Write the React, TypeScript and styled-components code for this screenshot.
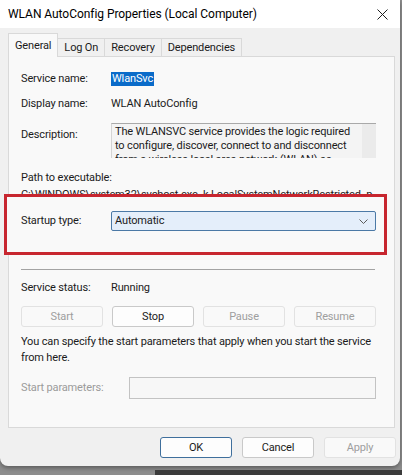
import React from 'react';
import styled, { createGlobalStyle } from 'styled-components';

const GlobalStyle = createGlobalStyle`
  html, body {
    margin: 0;
    padding: 0;
  }
  body {
    width: 402px;
    height: 475px;
    overflow: hidden;
    background: #8d8d8d;
    font-family: Roboto, "Liberation Sans", sans-serif;
    font-size: 11px;
    letter-spacing: -0.15px;
    color: #1b1b1b;
  }
`;

const Page = styled.div`
  width: 402px;
  height: 475px;
  display: flex;
  flex-direction: column;
`;

const Window = styled.div`
  width: 400px;
  height: 466px;
  background: #f0f0f0;
  border-radius: 0 0 8px 8px;
  box-shadow: 0 2px 4px rgba(0, 0, 0, 0.35);
  display: flex;
  flex-direction: column;
  overflow: hidden;
`;

const Backdrop = styled.div`
  flex: 1;
  display: flex;
  padding: 4px 0 0 155px;
`;

const DarkBlock = styled.div`
  flex: 1;
  background: #3b3b3b;
`;

const TitleBar = styled.div`
  height: 28px;
  background: #ffffff;
  display: flex;
  align-items: center;
  justify-content: space-between;
  padding-left: 8px;
`;

const Title = styled.div`
  font-size: 12px;
  letter-spacing: -0.05px;
  color: #000;
`;

const CloseButton = styled.div`
  width: 36px;
  height: 28px;
  display: flex;
  align-items: center;
  justify-content: center;
`;

const Body = styled.div`
  flex: 1;
  padding: 5px 5px 0 8px;
  display: flex;
  flex-direction: column;
`;

const TabRow = styled.div`
  height: 23px;
  display: flex;
  align-items: flex-end;
`;

const Tab = styled.div<{ $active?: boolean }>`
  position: relative;
  box-sizing: border-box;
  height: ${p => (p.$active ? '24px' : '18px')};
  margin-bottom: ${p => (p.$active ? '-1px' : '0')};
  margin-left: ${p => (p.$active ? '0' : '-1px')};
  padding: 0 6px;
  display: flex;
  align-items: center;
  background: ${p => (p.$active ? '#f9f9f9' : '#f0f0f0')};
  border: 1px solid #d9d9d9;
  border-bottom: none;
  z-index: ${p => (p.$active ? 1 : 0)};
  color: #1b1b1b;
  &:first-child {
    margin-left: 0;
  }
`;

const Panel = styled.div`
  box-sizing: border-box;
  height: 372px;
  background: #f9f9f9;
  border: 1px solid #d9d9d9;
  padding: 0 18px 0 12px;
  display: flex;
  flex-direction: column;
`;

const FieldRow = styled.div<{ $top: number; $label?: number }>`
  margin-top: ${p => p.$top}px;
  display: grid;
  grid-template-columns: ${p => p.$label ?? 90}px 1fr;
  align-items: center;
  line-height: 14px;
`;

const Label = styled.div<{ $muted?: boolean; $pad?: number }>`
  align-self: ${p => (p.$pad ? 'start' : 'center')};
  padding-top: ${p => p.$pad ?? 0}px;
  color: ${p => (p.$muted ? '#9b9b9b' : '#1b1b1b')};
`;

const Selected = styled.span`
  justify-self: start;
  background: #0a6bc9;
  color: #ffffff;
  padding: 0 1px;
`;

const DescBox = styled.div`
  height: 35px;
  box-sizing: border-box;
  border-top: 1px solid #a9a9a9;
  border-left: 1px solid #d4d4d4;
  background: #f4f4f4;
  display: flex;
  overflow: hidden;
`;

const DescText = styled.div`
  flex: 1;
  padding: 1px 0 0 3px;
  line-height: 14px;
  white-space: nowrap;
  overflow: hidden;
`;

const ScrollTrack = styled.div`
  width: 14px;
  background: #ebebeb;
`;

const Line = styled.div<{ $top: number }>`
  margin-top: ${p => p.$top}px;
  line-height: 14px;
  white-space: nowrap;
  overflow: hidden;
`;

const Highlight = styled.div`
  position: relative;
  margin: -8px -11px 0 -17px;
  height: 61px;
  box-sizing: border-box;
  border: 3px solid #c7262f;
  background: #f9f9f9;
  padding: 14px 8px 0 14px;
`;

const SelectBox = styled.div`
  height: 20px;
  box-sizing: border-box;
  border: 1px solid #4b79a6;
  border-radius: 2px;
  background: #e4eefa;
  display: flex;
  align-items: center;
  justify-content: space-between;
  padding: 0 7px 0 3px;
`;

const Separator = styled.div`
  margin-top: 14px;
  margin-right: 1px;
  height: 1px;
  background: #a3a3a3;
`;

const ButtonRow = styled.div`
  margin-top: 11px;
  display: grid;
  grid-template-columns: repeat(4, 1fr);
  gap: 9px;
`;

const Button = styled.div<{ $disabled?: boolean; $primary?: boolean; $w?: number }>`
  box-sizing: border-box;
  height: 21px;
  width: ${p => (p.$w ? `${p.$w}px` : 'auto')};
  display: flex;
  align-items: center;
  justify-content: center;
  border-radius: 3px;
  background: ${p => (p.$disabled ? '#f9f9f9' : '#fdfdfd')};
  border: 1px solid ${p => (p.$primary ? '#3f6f9c' : p.$disabled ? '#e2e2e2' : '#c9c9c9')};
  color: ${p => (p.$disabled ? '#9e9e9e' : '#1b1b1b')};
`;

const Paragraph = styled.div`
  margin-top: 7px;
  line-height: 16px;
`;

const InputBox = styled.div`
  height: 22px;
  box-sizing: border-box;
  border: 1px solid #c3c3c3;
  background: #f7f7f7;
`;

const Footer = styled.div`
  margin: 9px -1px 0 0;
  display: flex;
  justify-content: flex-end;
  gap: 10px;
`;

export default function App() {
  return (
    <Page>
      <GlobalStyle />
      <Window>
        <TitleBar>
          <Title>WLAN AutoConfig Properties (Local Computer)</Title>
          <CloseButton>
            <svg width="11" height="11" viewBox="0 0 11 11">
              <path d="M0.5 0.5 L10.5 10.5 M10.5 0.5 L0.5 10.5" stroke="#1f1f1f" strokeWidth="1" fill="none" />
            </svg>
          </CloseButton>
        </TitleBar>
        <Body>
          <TabRow>
            <Tab $active>General</Tab>
            <Tab>Log On</Tab>
            <Tab>Recovery</Tab>
            <Tab>Dependencies</Tab>
          </TabRow>
          <Panel>
            <FieldRow $top={15}>
              <Label>Service name:</Label>
              <Selected>WlanSvc</Selected>
            </FieldRow>
            <FieldRow $top={11}>
              <Label>Display name:</Label>
              <div>WLAN AutoConfig</div>
            </FieldRow>
            <FieldRow $top={12}>
              <Label $pad={5}>Description:</Label>
              <DescBox>
                <DescText>
                  The WLANSVC service provides the logic required
                  <br />
                  to configure, discover, connect to and disconnect
                  <br />
                  from a wireless local area network (WLAN) as
                </DescText>
                <ScrollTrack />
              </DescBox>
            </FieldRow>
            <Line $top={13}>Path to executable:</Line>
            <Line $top={3}>C:\WINDOWS\system32\svchost.exe -k LocalSystemNetworkRestricted -p</Line>
            <Highlight>
              <FieldRow $top={0}>
                <Label>Startup type:</Label>
                <SelectBox>
                  <span>Automatic</span>
                  <svg width="9" height="5" viewBox="0 0 9 5">
                    <path d="M0.5 0.5 L4.5 4.5 L8.5 0.5" stroke="#5a5a5a" strokeWidth="1" fill="none" />
                  </svg>
                </SelectBox>
              </FieldRow>
            </Highlight>
            <Separator />
            <FieldRow $top={11}>
              <Label>Service status:</Label>
              <div>Running</div>
            </FieldRow>
            <ButtonRow>
              <Button $disabled>Start</Button>
              <Button>Stop</Button>
              <Button $disabled>Pause</Button>
              <Button $disabled>Resume</Button>
            </ButtonRow>
            <Paragraph>
              You can specify the start parameters that apply when you start the service
              <br />
              from here.
            </Paragraph>
            <FieldRow $top={11} $label={108}>
              <Label $muted>Start parameters:</Label>
              <InputBox />
            </FieldRow>
          </Panel>
          <Footer>
            <Button $primary $w={72}>OK</Button>
            <Button $w={72}>Cancel</Button>
            <Button $disabled $w={72}>Apply</Button>
          </Footer>
        </Body>
      </Window>
      <Backdrop>
        <DarkBlock />
      </Backdrop>
    </Page>
  );
}
